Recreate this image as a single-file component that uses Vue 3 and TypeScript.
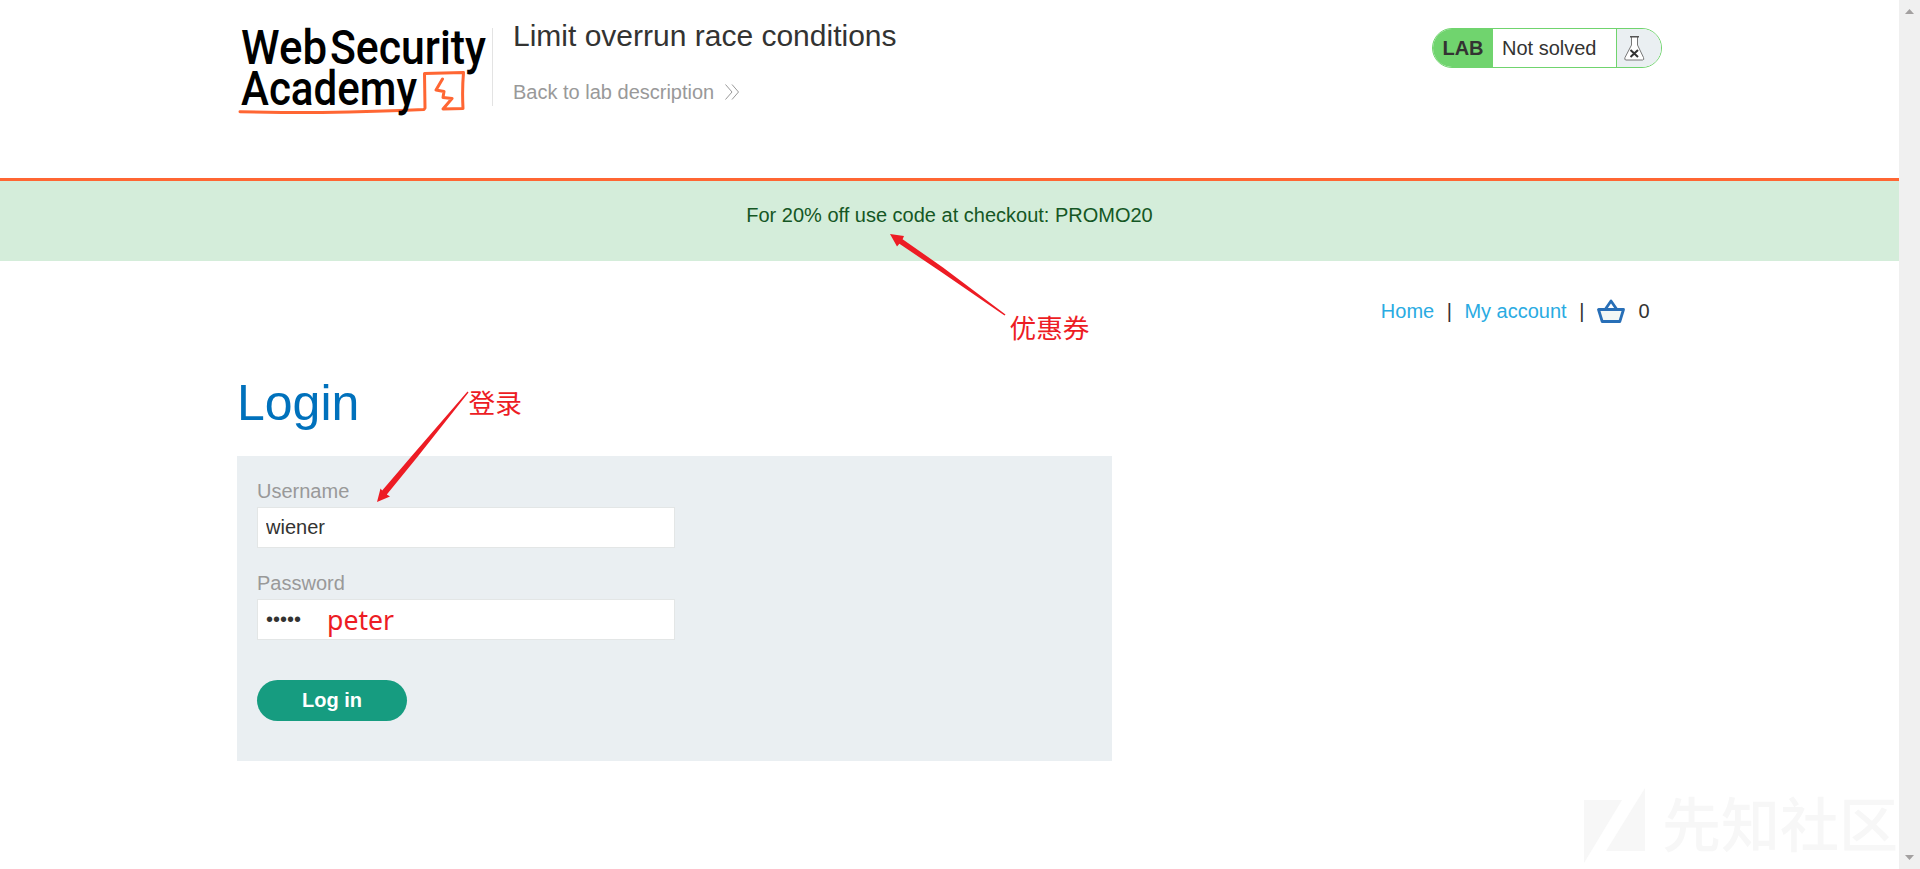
<script setup lang="ts">
import { ref } from 'vue'

const title = 'Limit overrun race conditions'
const username = ref('wiener')
const password = ref('peter')
const cartCount = ref(0)
</script>

<template>
  <div class="window">
    <div class="page">
      <header class="header">
        <div class="container header-row">
          <svg class="logo" width="256" height="120" viewBox="0 0 256 120">
            <path class="swash" d="M3 111.800L45 112.500L85 112.500Q140 111.500 187 109.500L188 108L187.500 73.500L226.500 72.500Q225 90 226 108.500L206 109L215 98.500L206 97.500L207 91.500L199 90L205.500 79" />
            <g class="logo-text">
              <text x="4" y="64" textLength="86" lengthAdjust="spacingAndGlyphs">Web</text>
              <text x="93" y="64" textLength="156" lengthAdjust="spacingAndGlyphs">Security</text>
              <text x="4" y="105" textLength="176" lengthAdjust="spacingAndGlyphs">Academy</text>
            </g>
            <path class="rule" d="M255.500 28V106" />
          </svg>
          <div class="titles">
            <h2>{{ title }}</h2>
            <a class="back">Back to lab description
              <svg width="16" height="18" viewBox="0 0 16 18">
                <path d="M1.500 1.500L8 9L1.500 16.500M8 1.500L14.500 9L8 16.500" />
              </svg>
            </a>
          </div>
          <div class="status">
            <strong>LAB</strong>
            <span>Not solved</span>
            <i>
              <svg width="22" height="26" viewBox="0 0 22 26">
                <path class="flask" d="M7.500 2V10L1 22.500Q0 25 2 25H18.500Q20.500 25 19.500 22.500L13.500 10V2" />
                <path class="lip" d="M6 1.800H15" />
                <path class="cross" d="M6.500 15L14 22M14 15L6.500 22" />
              </svg>
            </i>
          </div>
        </div>
      </header>
      <div class="banner">For 20% off use code at checkout: PROMO20</div>
      <main class="container">
        <nav>
          <a>Home</a><b>|</b><a>My account</a><b>|</b>
          <svg class="basket" width="28" height="25" viewBox="0 0 28 25">
            <path class="body" d="M1.500 10.500H26.500L22.800 22.500H5.200Z" />
            <path d="M8.500 10L14 2L19.500 10" />
          </svg>
          <span>{{ cartCount }}</span>
        </nav>
        <h1>Login</h1>
        <form @submit.prevent>
          <label for="username">Username</label>
          <input id="username" v-model="username" type="text">
          <label for="password">Password</label>
          <input id="password" v-model="password" type="password">
          <button type="submit">Log in</button>
        </form>
      </main>
    </div>
    <aside class="scrollbar">
      <svg width="9" height="5" viewBox="0 0 9 5"><path d="M0 5L4.500 0L9 5Z" /></svg>
      <svg width="9" height="5" viewBox="0 0 9 5"><path d="M0 0L4.500 5L9 0Z" /></svg>
    </aside>

    <svg class="arrows" width="1920" height="869" viewBox="0 0 1920 869">
      <path d="M890 234L904 236L902.600 239.200L943 267.500L1005.500 314.500L1004.500 315.500L940.500 271.500L899.400 243.800L897 246.500Z" />
      <path d="M377 502L380.500 488.500L382.200 490.600L413 454.500L467.500 391.500L468.500 392.500L417 457.500L386.800 494.400L390 496.500Z" />
    </svg>
    <span class="note coupon">优惠券</span>
    <span class="note login">登录</span>
    <span class="note peter">peter</span>
    <div class="watermark">
      <svg width="61" height="75" viewBox="0 0 61 75">
        <path d="M0 12H38L0 75ZM61 0V63H22Z" />
      </svg>
      <span>先知社区</span>
    </div>
  </div>
</template>

<style>
body { margin: 0; overflow: hidden; }
</style>

<style scoped>
.window {
  position: relative;
  display: flex;
  height: 869px;
  overflow: hidden;
  background: #fff;
  color: #333332;
  font: 20px/26px "Liberation Sans", Arial, sans-serif;
}
.page { flex: 1; }
.container { width: 1425px; margin: 0 auto; }
.header { height: 178px; border-bottom: 3px solid #ff6633; }
.header-row { display: flex; }
.logo { flex: none; overflow: visible; }
.logo-text { font: 500 48px Roboto, sans-serif; fill: #000; }
.swash { fill: none; stroke: #ff6633; stroke-width: 3; stroke-linejoin: round; stroke-linecap: round; }
.rule { stroke: #e3e3e3; }
.titles { flex: 1; padding: 18px 0 0 20px; }
h2 { margin: 0; font-size: 30px; line-height: 36px; font-weight: 400; }
.back { display: flex; align-items: center; gap: 10px; margin-top: 25px; color: #999; }
.back svg { fill: none; stroke: #999; stroke-width: 1; }
.status {
  box-sizing: border-box;
  display: flex;
  width: 230px;
  height: 40px;
  margin-top: 28px;
  overflow: hidden;
  border: 1px solid #70d46e;
  border-radius: 20px;
  line-height: 39px;
}
.status strong { width: 60px; text-align: center; background: #70d46e; }
.status span { flex: 1; padding-left: 9px; }
.status i { display: flex; align-items: center; width: 37px; padding-left: 7px; border-left: 1px solid #70d46e; background: #eaeff2; }
.flask { fill: #fff; stroke: #777; }
.lip { stroke: #555; stroke-width: 1.500; }
.cross { stroke: #333; stroke-width: 2; }
.banner { box-sizing: border-box; height: 80px; padding-top: 21px; background: #d4edda; color: #155724; text-align: center; }
nav { display: flex; align-items: center; justify-content: flex-end; height: 26px; padding: 37px 12.500px 0 0; }
nav a { color: #29abe2; }
nav b { margin: 0 12.500px; font-weight: 400; }
.basket { margin-right: 13.500px; fill: none; stroke: #286fb7; stroke-width: 2.800; stroke-linejoin: round; }
.basket .body { fill: #f1f7f5; }
h1 { margin: 50px 0 24px; color: #0071bc; font-size: 50px; line-height: 58px; font-weight: 400; }
form { box-sizing: border-box; width: 875px; height: 305px; padding: 22px 20px; background: #eaeff2; }
label { display: block; height: 29px; color: #999; }
input {
  box-sizing: border-box;
  display: block;
  width: 418px;
  height: 41px;
  margin: 0 0 22px;
  padding: 0 8px;
  border: 1px solid #e3e6e6;
  outline: 0;
  background: #fff;
  color: #333332;
  font: inherit;
}
button {
  width: 150px;
  height: 41px;
  margin-top: 18px;
  padding: 0;
  border: 0;
  border-radius: 21px;
  background: #169c80;
  color: #fff;
  font: bold 20px "Liberation Sans", Arial, sans-serif;
}
.scrollbar {
  box-sizing: border-box;
  display: flex;
  flex-direction: column;
  align-items: center;
  justify-content: space-between;
  width: 21px;
  padding: 9px 0;
  background: #f0f0f0;
}
.scrollbar svg { fill: #a3a0a0; }
.arrows { position: absolute; inset: 0; fill: #ed1c24; pointer-events: none; }
.note { position: absolute; color: #ed1c24; font: 26.670px/36px "Noto Sans CJK SC", sans-serif; }
.coupon { left: 1009.500px; top: 309px; }
.login { left: 468.500px; top: 384px; }
.peter { left: 327px; top: 602px; font-family: "Noto Sans", sans-serif; }
.watermark { position: absolute; left: 1584px; top: 788px; display: flex; align-items: center; gap: 17px; color: #f7f7f7; }
.watermark svg { fill: #f7f7f7; }
.watermark span { margin-top: -8px; font: 500 59px/75px "Noto Sans CJK SC", sans-serif; white-space: nowrap; }
</style>
